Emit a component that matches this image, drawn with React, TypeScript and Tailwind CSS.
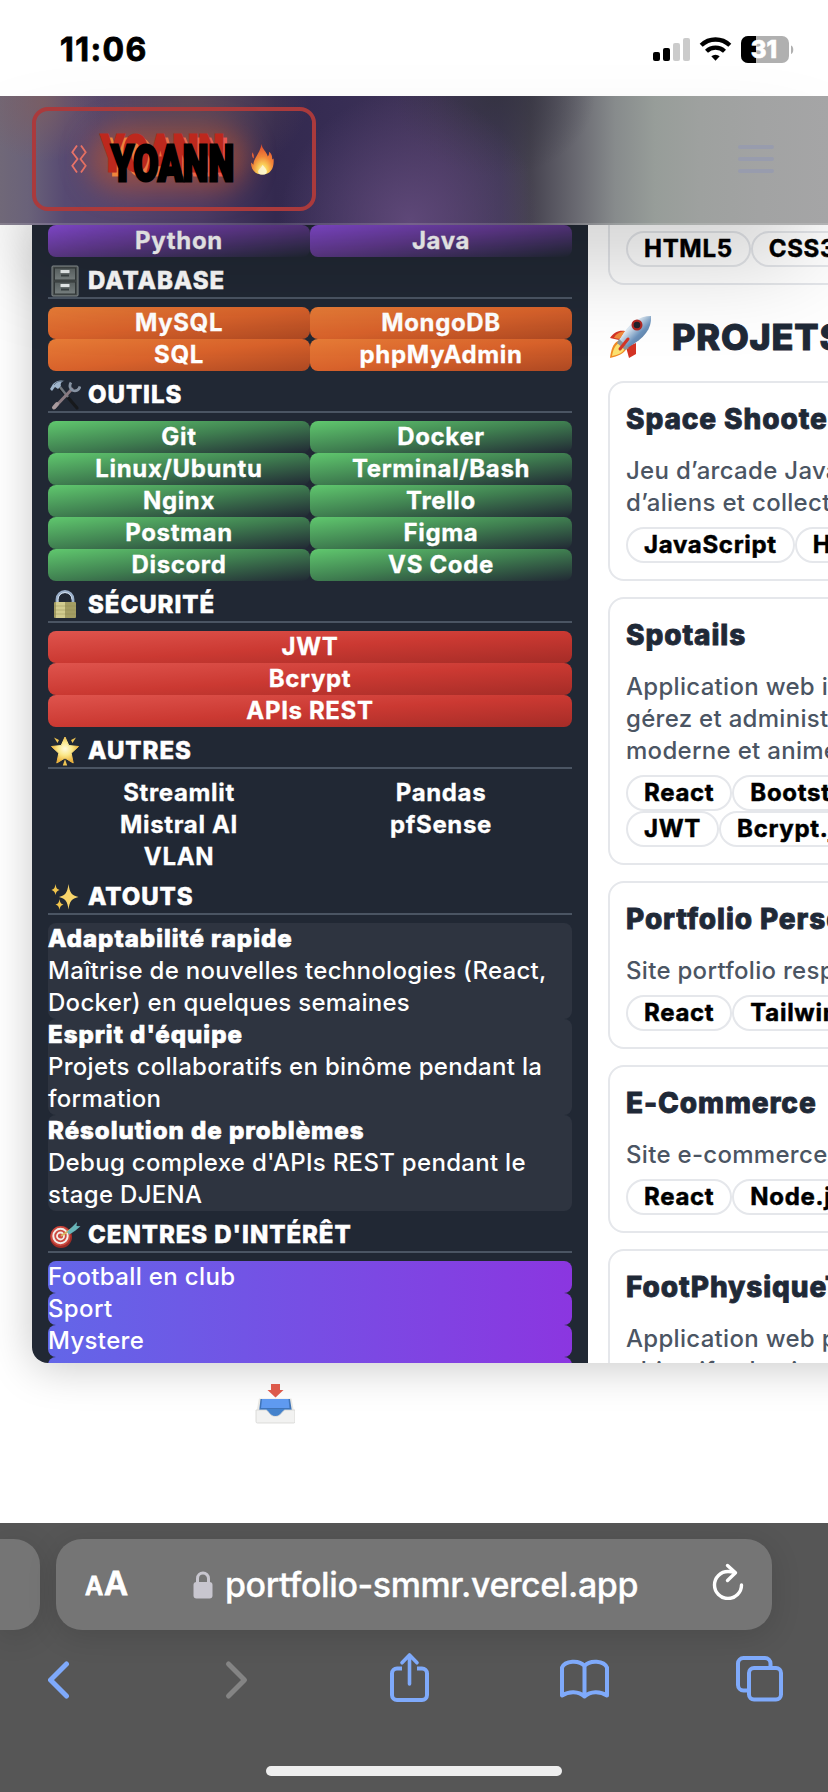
import React from "react";

type Tone = "purple" | "orange" | "green" | "red" | "none";

const tones: Record<Tone, string> = {
  purple: "bg-[linear-gradient(to_bottom_right,#8a4ddb,#633b91_45%,#21283400)]",
  orange: "bg-[linear-gradient(to_bottom_right,#e77c37,#d8622b_50%,#ad4822)]",
  green: "bg-[linear-gradient(to_bottom_right,#60c86e,#3f7e50_50%,#212834)]",
  red: "bg-[linear-gradient(to_bottom_right,#df544d,#cb3932_50%,#a52c27)]",
  none: "",
};

function Heading({ icon, children }: { icon: React.ReactNode; children: React.ReactNode }) {
  return (
    <div className="mb-2 flex h-[42px] items-center border-b-2 border-[#4b5563] pt-2">
      <span className="flex h-8 w-[34px] items-center justify-center">{icon}</span>
      <h3 className="ml-[6px] text-[24px] leading-8 font-extrabold tracking-[0.95px] text-white [-webkit-text-stroke:0.5px]">{children}</h3>
    </div>
  );
}

function Skills({ items, tone, cols = 2 }: { items: string[]; tone: Tone; cols?: number }) {
  return (
    <div className={cols === 2 ? "grid grid-cols-2" : "grid grid-cols-1"}>
      {items.map((s) => (
        <div
          key={s}
          className={"h-8 rounded-lg text-center text-[24px] leading-8 font-bold tracking-[0.65px] whitespace-nowrap text-white [-webkit-text-stroke:0.3px] " + tones[tone]}
        >
          {s}
        </div>
      ))}
    </div>
  );
}

function Asset({ title, lines }: { title: string; lines: string[] }) {
  return (
    <div className="rounded-lg bg-[#2e3440] text-[24px] leading-8 tracking-[0.3px] whitespace-nowrap text-white">
      <p className="font-extrabold tracking-[1px] [-webkit-text-stroke:0.7px]">{title}</p>
      {lines.map((l) => (
        <p key={l} className="font-medium">{l}</p>
      ))}
    </div>
  );
}

function Tags({ rows }: { rows: string[][] }) {
  return (
    <div>
      {rows.map((row, i) => (
        <div key={i} className="flex">
          {row.map((t) => (
            <span
              key={t}
              className="h-9 shrink-0 rounded-full border-2 border-[#e5e7eb] px-4 text-[24px] leading-8 font-bold tracking-[0.7px] text-black [-webkit-text-stroke:0.5px]"
            >
              {t}
            </span>
          ))}
        </div>
      ))}
    </div>
  );
}

function Project({ title, lines, tags }: { title: string; lines: string[]; tags: string[][] }) {
  return (
    <article className="mb-4 rounded-2xl border-2 border-[#e5e7eb] p-4 whitespace-nowrap">
      <h3 className="mb-4 text-[28px] leading-10 font-extrabold tracking-[0.9px] text-[#1f2937] [-webkit-text-stroke:0.8px]">{title}</h3>
      <div className="mb-2">
        {lines.map((l) => (
          <p key={l} className="text-[24px] leading-8 font-medium tracking-[0.3px] text-[#4b5563]">{l}</p>
        ))}
      </div>
      <Tags rows={tags} />
    </article>
  );
}

const Cabinet = () => (
  <svg width="28" height="32" viewBox="0 0 28 32">
    <defs>
      <linearGradient id="cab" x1="0" x2="0" y1="0" y2="1">
        <stop offset="0" stopColor="#5c6464" />
        <stop offset="1" stopColor="#7b8383" />
      </linearGradient>
    </defs>
    <rect x="1" y="1" width="26" height="30" rx="1" fill="#4a5051" stroke="#8b9293" strokeWidth="1" />
    <rect x="3.5" y="3" width="21" height="12" fill="url(#cab)" stroke="#343a3b" />
    <rect x="3.5" y="17" width="21" height="12" fill="url(#cab)" stroke="#343a3b" />
    <rect x="9.500" y="5" width="9" height="3" rx="0.500" fill="#e9eeee" />
    <path d="M10 10.500h8" stroke="#3b4243" strokeWidth="2" />
    <rect x="9.500" y="19" width="9" height="3" rx="0.500" fill="#e9eeee" />
    <path d="M10 24.500h8" stroke="#3b4243" strokeWidth="2" />
  </svg>
);

const Tools = () => (
  <svg width="32" height="32" viewBox="0 0 32 32">
    <path d="M10 8 28 29" stroke="#17191c" strokeWidth="3.200" strokeLinecap="round" />
    <path d="M11 8 19 18" stroke="#72777e" strokeWidth="2.500" />
    <path d="M23 10 6 28" stroke="#8a7a80" strokeWidth="3" strokeLinecap="round" />
    <path d="M8 25 5 28.500" stroke="#a99b9e" strokeWidth="4" strokeLinecap="round" />
    <path d="M22 3.500c-2 3-1 7 2 8s6-.500 7-4" fill="none" stroke="#8793a3" strokeWidth="2.800" />
    <path d="m1 10 3-5c4-4 8-4 12-3-3 0-5 2-4 5l-3 3-3-2-3 4z" fill="#9fb4cb" />
    <path d="M5 6c3-4 6-4 9-3.500" stroke="#5d6d80" fill="none" />
  </svg>
);

const Padlock = () => (
  <svg width="26" height="30" viewBox="0 0 26 30">
    <path d="M5 13V9.500a8 8 0 0 1 16 0V13" fill="none" stroke="#9aafca" strokeWidth="2.800" />
    <path d="M6 13V9.500a7 7 0 0 1 14 0" fill="none" stroke="#d3dfed" strokeWidth="1" />
    <rect x="2" y="12" width="22" height="16" rx="1" fill="#a39d63" />
    <rect x="4" y="12" width="9" height="16" fill="#d2cc8f" />
    <path d="M2 16h22M2 20h22M2 24h22" stroke="#8d8852" strokeWidth="0.700" opacity="0.600" />
  </svg>
);

const Star = () => (
  <svg width="28" height="30" viewBox="0 0 28 30">
    <defs>
      <radialGradient id="st" cx="0.500" cy="0.450" r="0.500">
        <stop offset="0" stopColor="#fffbe0" />
        <stop offset="0.500" stopColor="#fbe98c" />
        <stop offset="1" stopColor="#eeb640" />
      </radialGradient>
    </defs>
    <path d="m14 1 3.800 8.500 9.700 1-7.300 6.700 2 9.800-8.200-5-8.200 5 2-9.800L.5 10.500l9.700-1z" fill="url(#st)" stroke="url(#st)" strokeLinejoin="round" />
    <path d="m3 1.500 5 2.500-1.500 3zM25 1.500l-5 2.500 1.500 3zM14 23l2.200 6.500h-4.400z" fill="#eec453" />
  </svg>
);

const Sparkles = () => (
  <svg width="28" height="28" viewBox="0 0 28 28">
    <path d="M17.500 1c1.200 9 3 11 10 13-7 2-8.800 4-10 12.500C16.300 18 14.500 16 8 14c6.500-2 8.300-4 9.500-13z" fill="#f8d56b" />
    <path d="M4.500 1c.6 4 1.500 5 4 6-2.500 1-3.400 2-4 5-.6-3-1.500-4-4-5 2.500-1 3.400-2 4-6zM8.500 16c.6 4 1.500 5 4 5.500-2.500 1-3.400 2-4 5.500-.6-3.500-1.500-4.500-4-5.500 2.500-.5 3.400-1.500 4-5.500z" fill="#f3c64c" />
  </svg>
);

const Target = () => (
  <svg width="30" height="28" viewBox="0 0 30 28" className="overflow-visible">
    <ellipse cx="11" cy="16" rx="11" ry="11" fill="#a02d27" />
    <circle cx="10.500" cy="15" r="10" fill="#cc4a41" />
    <circle cx="10.500" cy="15" r="7.200" fill="none" stroke="#f3eee9" strokeWidth="2" />
    <circle cx="10.500" cy="15" r="3.500" fill="none" stroke="#f3eee9" strokeWidth="1.800" />
    <path d="M11 15 23 7" stroke="#d8b45e" strokeWidth="2" />
    <path d="m17 11 5-5 5-5-.5 4 4 .3-5 4.200-6 4z" fill="#67b5b9" />
  </svg>
);

const Rocket = () => (
  <svg width="44" height="44" viewBox="0 0 44 44">
    <defs>
      <linearGradient id="rk" x1="0" y1="0" x2="1" y2="1">
        <stop offset="0" stopColor="#7ba3c8" />
        <stop offset="0.350" stopColor="#dfeaf3" />
        <stop offset="0.600" stopColor="#6c93bd" />
        <stop offset="1" stopColor="#48637f" />
      </linearGradient>
    </defs>
    <path d="M17 16c-6-1-11 1-15 7l9 2z" fill="#d43425" />
    <path d="M17 16c-6 1-9 3-11 7l6 1z" fill="#ef8b3d" />
    <path d="m28 28 0 11-7 4-3-11z" fill="#d43425" />
    <path d="M10 26c-5 2-7 9-8 17 8-2 14-4 17-10z" fill="#f08a24" />
    <path d="M11 28c-4 2-6 7-7 13 6-1 11-3 13-8z" fill="#fbe271" />
    <path d="M43 1c-12 0-22 7-31 23l-1 4 6 5 4-1C36 23 44 14 43 1z" fill="url(#rk)" />
    <path d="m11 24 10 9-4 2-8-7z" fill="#8b959d" />
    <circle cx="29" cy="10" r="5.500" fill="#b22a24" />
    <circle cx="29" cy="10" r="3.300" fill="#20242d" />
    <path d="m20 24-8 10" stroke="#d43425" strokeWidth="3" strokeLinecap="round" />
  </svg>
);

const Flame = () => (
  <svg width="25" height="31" viewBox="0 0 26 30" preserveAspectRatio="none">
    <defs>
      <radialGradient id="fl" cx="0.500" cy="0.880" r="0.850">
        <stop offset="0" stopColor="#fffbd0" />
        <stop offset="0.250" stopColor="#fdd75c" />
        <stop offset="0.550" stopColor="#f58b3a" />
        <stop offset="1" stopColor="#e2492f" />
      </radialGradient>
    </defs>
    <path d="M12 0c.5 5 5 7 6.500 12 1-1 1.500-2.500 1.200-4.500 3 2 3.300 4 3.500 7.500l1.300-1c1 9-3 15.500-11.500 15.500C5 29.500 1 25 1 18c1 .6 1.600 1 2.500 2C3.600 14 11 8 12 0z" fill="url(#fl)" />
    <path d="M2.500 8c-1 3-.5 5 1.500 6 0-2 .5-3-1.500-6z" fill="#e8603a" />
    <path d="M13 20c2.500 3 4.500 4.500 4.500 6.500 0 2.300-2 3-4.500 3s-4.500-.7-4.500-3C8.500 24.500 12 23 13 20z" fill="#fffbd0" />
  </svg>
);

const Inbox = () => (
  <svg width="40" height="42" viewBox="0 0 40 42">
    <path d="M16 1h9v6h3.500L20.500 14.500 12.500 7H16z" fill="#dd5a4b" />
    <path d="M4 15.500h32.500l2.500 13H1.500z" fill="#e9e8e4" />
    <path d="M5.500 16h29.500l2 13H4z" fill="#3f74b8" />
    <path d="M7 16h26.500l1 9H6z" fill="#5f9af0" />
    <path d="M5 26h31v4l-5 3H10z" fill="#4482cc" />
    <path d="M1 27h10c2 0 4 6.500 9.300 6.500S28 27 30 27h10v11.500a1.500 1.500 0 0 1-1.500 1.500h-36A1.500 1.500 0 0 1 1 38.500z" fill="#f2f2f1" stroke="#d4d4d2" strokeWidth="0.800" />
  </svg>
);

const layer =
  "absolute left-0 top-0 origin-top-left scale-x-[0.735] font-[Roboto,sans-serif] text-[49.500px] leading-[54px] font-black whitespace-nowrap";

function StatusBar() {
  return (
    <div className="flex h-24 items-start justify-between bg-white">
      <span className="ml-[60px] pt-[30px] text-[32px] leading-10 font-bold tracking-[1.400px] text-black [-webkit-text-stroke:0.8px]">11:06</span>
      <div className="mr-[33px] flex pt-[36px]">
        <svg width="142" height="28" viewBox="0 0 142 28">
          <rect x="0" y="16" width="7" height="9" rx="2" />
          <rect x="10" y="12" width="7" height="13" rx="2" />
          <rect x="20" y="7" width="7" height="18" rx="2" fill="#cbcbcb" />
          <rect x="30" y="2" width="7" height="23" rx="2" fill="#cbcbcb" />
          <g fill="none" stroke="#000" strokeWidth="4.300">
            <path d="M48.200 9.300a20.500 20.500 0 0 1 28.600 0" />
            <path d="M53.500 15.200a13 13 0 0 1 18 0" />
          </g>
          <path d="M58.300 20.300a6.300 6.300 0 0 1 8.400 0l-4.200 4.500z" />
          <rect x="88" y="0" width="48" height="27" rx="7" fill="#b0b0b0" />
          <path d="M103 0H95a7 7 0 0 0-7 7v13a7 7 0 0 0 7 7h8z" />
          <path d="M138 9.500c3 1 3 7.500 0 8.500z" fill="#b0b0b0" />
          <text x="111" y="22" textAnchor="middle" fontSize="24" fontWeight="800" fill="#fff" stroke="#fff" strokeWidth="0.600" fontFamily="Inter, sans-serif">31</text>
        </svg>
      </div>
    </div>
  );
}

function Header() {
  return (
    <header className="relative z-10 flex h-[129px] items-start justify-between border-b-2 border-white/15 bg-[radial-gradient(ellipse_130px_130px_at_410px_125px,#60497af0,#60497a00),radial-gradient(ellipse_120px_90px_at_190px_0px,#5d4a55e0,#5d4a5500),radial-gradient(ellipse_60px_60px_at_42px_6px,#7d5f62d0,#7d5f6200),radial-gradient(ellipse_100px_80px_at_495px_0px,#33323fd0,#33323f00),linear-gradient(90deg,#706878_0px,#6a6279_28px,#574a72_65px,#54436d_130px,#4a3a64_200px,#33294f_275px,#372d54_340px,#413458_440px,#3f3855_500px,#45424f_530px,#686870_575px,#878b8c_615px,#979d99_655px,#9ea19f_700px,#a2a3a3_760px,#a5a5a6_828px)] bg-origin-border shadow-[0_50px_100px_-24px_rgba(0,0,0,0.25)]">
      <div className="mt-[11px] ml-8 flex h-[104px] w-[284px] items-center rounded-2xl border-4 border-[#aa3a3c]">
        <svg width="16" height="28" viewBox="0 0 16 28" className="ml-[35px]" fill="none" stroke="#ec756c" strokeWidth="1.800">
          <path d="M6 .5 1.300 7.300 6.500 14 1.300 20.700 6 27.500M10 .5l4.700 6.800L9.500 14l5.200 6.700L10 27.500" />
        </svg>
        <div className="relative ml-[14px] h-[54px] w-[134px]">
          <div className="absolute -inset-x-3 -inset-y-1 rounded-full bg-[#c0552c]/60 blur-[14px]" />
          <span aria-hidden="true" className={layer + " translate-x-[4px] -translate-y-[1px] bg-gradient-to-r from-[#f08a3a] to-[#e85450] bg-clip-text text-transparent [-webkit-text-stroke:3px_transparent]"}>YOANN</span>
          <span aria-hidden="true" className={layer + " translate-x-0 -translate-y-[5px] text-[#bd281d] [-webkit-text-stroke:3px]"}>YOANN</span>
          <span className={layer + " translate-x-[10px] translate-y-[5px] text-black [-webkit-text-stroke:3px]"}>YOANN</span>
        </div>
        <span className="ml-[15px]"><Flame /></span>
      </div>
      <svg width="36" height="30" viewBox="0 0 36 30" className="mt-[48px] mr-[54px]" stroke="#989cad" strokeWidth="4" strokeLinecap="round">
        <path d="M2 3h32M2 15h32M2 27h32" />
      </svg>
    </header>
  );
}

function Sidebar() {
  return (
    <aside className="h-full w-[556px] shrink-0 bg-[#212834] px-4">
      <Skills tone="purple" items={["Python", "Java"]} />
      <Heading icon={<Cabinet />}>DATABASE</Heading>
      <Skills tone="orange" items={["MySQL", "MongoDB", "SQL", "phpMyAdmin"]} />
      <Heading icon={<Tools />}>OUTILS</Heading>
      <Skills
        tone="green"
        items={["Git", "Docker", "Linux/Ubuntu", "Terminal/Bash", "Nginx", "Trello", "Postman", "Figma", "Discord", "VS Code"]}
      />
      <Heading icon={<Padlock />}>SÉCURITÉ</Heading>
      <Skills tone="red" cols={1} items={["JWT", "Bcrypt", "APIs REST"]} />
      <Heading icon={<Star />}>AUTRES</Heading>
      <Skills tone="none" items={["Streamlit", "Pandas", "Mistral AI", "pfSense", "VLAN"]} />
      <Heading icon={<Sparkles />}>ATOUTS</Heading>
      <Asset title="Adaptabilité rapide" lines={["Maîtrise de nouvelles technologies (React,", "Docker) en quelques semaines"]} />
      <Asset title="Esprit d'équipe" lines={["Projets collaboratifs en binôme pendant la", "formation"]} />
      <Asset title="Résolution de problèmes" lines={["Debug complexe d'APIs REST pendant le", "stage DJENA"]} />
      <Heading icon={<Target />}>CENTRES D'INTÉRÊT</Heading>
      {["Football en club", "Sport", "Mystere", "Jeux vidéo"].map((t) => (
        <div key={t} className="h-8 rounded-lg bg-[linear-gradient(90deg,#6366e8,#8b36e0)] text-[24px] leading-8 font-medium tracking-[0.35px] text-white">
          {t}
        </div>
      ))}
    </aside>
  );
}

function Content() {
  return (
    <div className="w-[520px] shrink-0 bg-white pl-5">
      <div className="h-[60px] rounded-b-2xl border-2 border-t-0 border-[#e5e7eb] px-4 pt-[6px]">
        <Tags rows={[["HTML5", "CSS3", "JavaScript"]]} />
      </div>
      <div className="flex h-24 items-center pt-2">
        <Rocket />
        <h2 className="ml-5 text-[36px] leading-10 font-extrabold tracking-[0.800px] whitespace-nowrap text-[#1f2937] [-webkit-text-stroke:1px]">PROJETS RÉALISÉS</h2>
      </div>
      <Project title="Space Shooter" lines={["Jeu d’arcade JavaScript", "d’aliens et collectez des bonus"]} tags={[["JavaScript", "HTML5"]]} />
      <Project
        title="Spotails"
        lines={["Application web interactive", "gérez et administrez", "moderne et animée"]}
        tags={[["React", "Bootstrap"], ["JWT", "Bcrypt.js"]]}
      />
      <Project title="Portfolio Personnel" lines={["Site portfolio responsive"]} tags={[["React", "Tailwind"]]} />
      <Project title="E-Commerce" lines={["Site e-commerce complet"]} tags={[["React", "Node.js"]]} />
      <Project title="FootPhysiqueTest" lines={["Application web pour suivre", "objectifs physiques"]} tags={[["React"]]} />
    </div>
  );
}

function BrowserBar() {
  const blue = "#7faafb";
  return (
    <footer className="flex h-[269px] flex-col overflow-hidden bg-[#565656] pt-4">
      <div className="flex h-[91px] shrink-0 gap-4">
        <div className="w-10 rounded-r-[26px] bg-[#757575] shadow-[0_6px_30px_rgba(0,0,0,0.13)]" />
        <div className="flex w-[716px] items-center rounded-[26px] bg-[#757575] text-white shadow-[0_6px_30px_rgba(0,0,0,0.13)]">
          <div className="ml-[29px] flex w-[43px] items-baseline justify-between leading-10 font-semibold [-webkit-text-stroke:0.8px]">
            <span className="text-[25px]">A</span>
            <span className="text-[33px]">A</span>
          </div>
          <svg width="20" height="28" viewBox="0 0 20 28" className="ml-[65px]">
            <path d="M4.500 13V7.500a5.500 5.500 0 0 1 11 0V13" fill="none" stroke="#c8c6cf" strokeWidth="3" />
            <rect x="0.500" y="11" width="19" height="16.500" rx="3" fill="#c8c6cf" />
          </svg>
          <span className="ml-[12px] w-[430px] text-[34px] leading-10 font-medium tracking-[-0.400px] whitespace-nowrap [-webkit-text-stroke:0.3px]">portfolio-smmr.vercel.app</span>
          <svg width="32" height="38" viewBox="0 0 32 38" className="ml-[57px] -mt-[8px]" fill="none" stroke="#fff" strokeWidth="3.400" strokeLinecap="round" strokeLinejoin="round">
            <path d="M29.500 23a13.500 13.500 0 1 1-13.500-13.500c2.500 0 4.500.3 6.500 1" />
            <path d="m15.500 3.500 8 7.300-8 7.700" />
          </svg>
        </div>
      </div>
      <div className="mt-[22px] flex h-[54px] shrink-0 items-start pl-[48px]">
        <svg width="738" height="54" viewBox="0 0 738 54" fill="none" stroke={blue} strokeWidth="4" strokeLinecap="round" strokeLinejoin="round">
          <path d="m18.500 12-16 16 16 16" strokeWidth="5" />
          <path d="m180.500 12 16 16-16 16" stroke="#848484" strokeWidth="5" />
          <path d="M355 17.500h-5a5 5 0 0 0-5 5V44a5 5 0 0 0 5 5h25a5 5 0 0 0 5-5V22.500a5 5 0 0 0-5-5h-5" strokeLinecap="butt" transform="translate(-1 -1)" />
          <path d="M361.500 32V4M354 10.800l7.500-7.800 7.500 7.800" strokeWidth="3.600" />
          <path d="M536.500 44.500c-6-5.500-15.500-5.500-22.500-1V15.500c3-7 17-8 22.500-1.500 5.500-6.500 19.500-5.500 22.500 1.500v28c-7-4.500-16.500-4.500-22.500 1zM536.500 14v30" />
          <path d="M701 39.500h-4.500a5.500 5.500 0 0 1-5.500-5.500V12.500a5.500 5.500 0 0 1 5.500-5.500H718a5.500 5.500 0 0 1 5.500 5.500v5" strokeLinecap="butt" transform="translate(-1 -1)" />
          <rect x="701" y="16" width="32" height="31.500" rx="5" />
        </svg>
      </div>
      <div className="mx-auto mt-[60px] h-[10px] w-[296px] shrink-0 rounded-full bg-[#eeeeee]" />
    </footer>
  );
}

export default function App() {
  return (
    <div className="h-[1792px] w-[828px] overflow-hidden bg-white font-[Inter,sans-serif]">
      <StatusBar />
      <Header />
      <main className="h-[1298px] overflow-hidden">
        <div className="ml-8 flex h-[1138px] w-[1076px] overflow-hidden rounded-b-2xl shadow-[0_4px_44px_rgba(0,0,0,0.22)]">
          <Sidebar />
          <Content />
        </div>
        <div className="ml-[255px] pt-5">
          <Inbox />
        </div>
      </main>
      <BrowserBar />
    </div>
  );
}
